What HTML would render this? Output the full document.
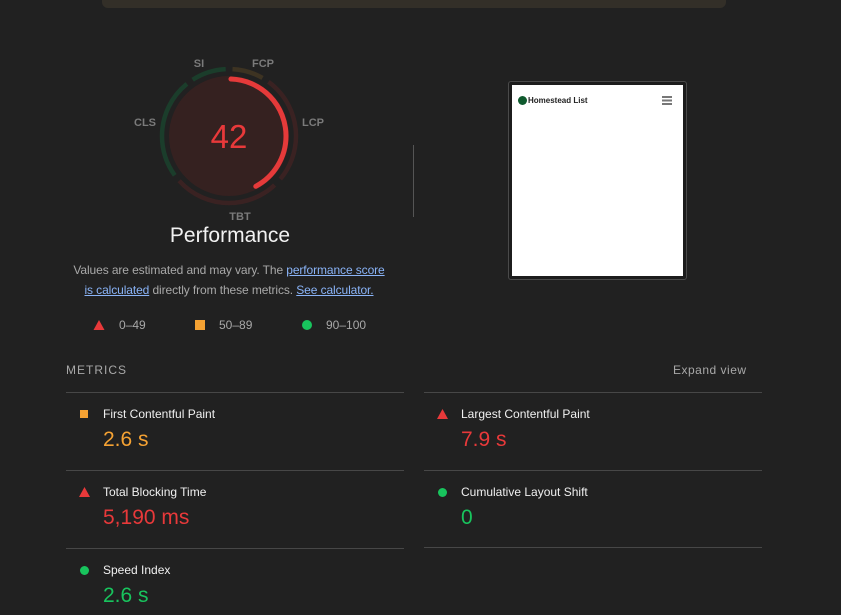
<!DOCTYPE html>
<html><head><meta charset="utf-8"><style>
html,body{margin:0;padding:0;background:#212121;width:841px;height:615px;overflow:hidden;font-family:"Liberation Sans",Arial,sans-serif}
.a{position:absolute}
.line{position:absolute;height:1px;background:#474747}
.mt{position:absolute;font-size:12px;color:#f0f0f0}
.mv{position:absolute;font-size:21px}
.red{color:#e8393a}.org{color:#f5a233}.grn{color:#18c45d}
a{color:#8ab4f8;text-decoration:underline}
</style></head><body>
<div class="a" style="left:102px;top:-6px;width:624px;height:14px;background:#332f28;border-radius:6px"></div>

<svg class="a" style="left:0;top:0" width="460" height="260">
<g transform="rotate(-90 229 136)" fill="none" stroke-width="4.5">
<circle cx="229" cy="136" r="67" stroke="#1b3d2b" stroke-dasharray="35.1 500" stroke-dashoffset="-382.4"/>
<circle cx="229" cy="136" r="67" stroke="#3d3322" stroke-dasharray="31.6 500" stroke-dashoffset="-3.5"/>
<circle cx="229" cy="136" r="67" stroke="#3a2222" stroke-dasharray="109.9 500" stroke-dashoffset="-42.1"/>
<circle cx="229" cy="136" r="67" stroke="#3a2222" stroke-dasharray="106.4 500" stroke-dashoffset="-160.2"/>
<circle cx="229" cy="136" r="67" stroke="#1b3d2b" stroke-dasharray="101.7 500" stroke-dashoffset="-273.6"/>
</g>
<circle cx="229" cy="136" r="60" fill="#352120"/>
<circle cx="229" cy="136" r="57" fill="none" stroke="#e53a3a" stroke-width="5" stroke-linecap="round" stroke-dasharray="149 500" stroke-dashoffset="-2" transform="rotate(-90 229 136)"/>
<text x="229" y="148" text-anchor="middle" font-family="Liberation Sans,sans-serif" font-size="33" fill="#e8393a">42</text>
<g fill="#7a7a7a" font-size="11" font-weight="bold" font-family="Liberation Sans,sans-serif" text-anchor="middle">
<text x="199" y="67">SI</text>
<text x="263" y="67">FCP</text>
<text x="145" y="126">CLS</text>
<text x="313" y="126">LCP</text>
<text x="240" y="220">TBT</text>
</g>
</svg>
<div class="a" style="left:130px;top:224px;width:200px;text-align:center;font-size:21px;color:#f2f2f2">Performance</div>
<div class="a" style="left:413px;top:145px;width:1px;height:72px;background:#555"></div>

<div class="a" style="left:29px;top:260px;width:400px;text-align:center;font-size:12px;line-height:20px;color:#a8a8a8;letter-spacing:-0.1px">Values are estimated and may vary. The <a>performance score</a><br><a>is calculated</a> directly from these metrics. <a>See calculator.</a></div>

<svg class="a" style="left:93px;top:320px" width="12" height="11"><polygon points="6,0 11.5,10 0.5,10" fill="#e8393a"/></svg>
<div class="a" style="left:119px;top:318px;font-size:12px;color:#a8a8a8">0–49</div>
<div class="a" style="left:195px;top:320px;width:10px;height:10px;background:#f5a233"></div>
<div class="a" style="left:219px;top:318px;font-size:12px;color:#a8a8a8">50–89</div>
<div class="a" style="left:302px;top:320px;width:10px;height:10px;border-radius:50%;background:#18c45d"></div>
<div class="a" style="left:326px;top:318px;font-size:12px;color:#a8a8a8">90–100</div>

<div class="a" style="left:508px;top:81px;width:177px;height:197px;border:1px solid #4a4a4a;border-radius:3px;background:#1c1c1c"></div>
<div class="a" style="left:512px;top:85px;width:171px;height:191px;background:#fff"></div>
<div class="a" style="left:518px;top:96px;width:9px;height:9px;border-radius:50%;background:#0f5a2e"></div>
<div class="a" style="left:528px;top:96px;font-size:8px;font-weight:bold;color:#222">Homestead List</div>
<div class="a" style="left:662px;top:96px;width:10px;height:1.5px;background:#777;box-shadow:0 3.5px 0 #777,0 7px 0 #777"></div>

<div class="a" style="left:66px;top:363px;font-size:12px;letter-spacing:1px;color:#a8a8a8">METRICS</div>
<div class="a" style="left:673px;top:363px;font-size:12px;letter-spacing:.5px;color:#a8a8a8">Expand view</div>

<div class="line" style="left:66px;top:392px;width:338px"></div>
<div class="line" style="left:424px;top:392px;width:338px"></div>
<div class="line" style="left:66px;top:470px;width:338px"></div>
<div class="line" style="left:424px;top:470px;width:338px"></div>
<div class="line" style="left:66px;top:548px;width:338px"></div>
<div class="line" style="left:424px;top:547px;width:338px"></div>

<div class="a" style="left:80px;top:410px;width:8px;height:8px;background:#f5a233"></div>
<div class="mt" style="left:103px;top:407px">First Contentful Paint</div>
<div class="mv org" style="left:103px;top:428px">2.6 s</div>

<svg class="a" style="left:437px;top:409px" width="11" height="10"><polygon points="5.5,0 11,10 0,10" fill="#e8393a"/></svg>
<div class="mt" style="left:461px;top:407px">Largest Contentful Paint</div>
<div class="mv red" style="left:461px;top:428px">7.9 s</div>

<svg class="a" style="left:79px;top:487px" width="11" height="10"><polygon points="5.5,0 11,10 0,10" fill="#e8393a"/></svg>
<div class="mt" style="left:103px;top:485px">Total Blocking Time</div>
<div class="mv red" style="left:103px;top:506px">5,190 ms</div>

<div class="a" style="left:438px;top:488px;width:9px;height:9px;border-radius:50%;background:#18c45d"></div>
<div class="mt" style="left:461px;top:485px">Cumulative Layout Shift</div>
<div class="mv grn" style="left:461px;top:506px">0</div>

<div class="a" style="left:80px;top:566px;width:9px;height:9px;border-radius:50%;background:#18c45d"></div>
<div class="mt" style="left:103px;top:563px">Speed Index</div>
<div class="mv grn" style="left:103px;top:584px">2.6 s</div>
</body></html>
